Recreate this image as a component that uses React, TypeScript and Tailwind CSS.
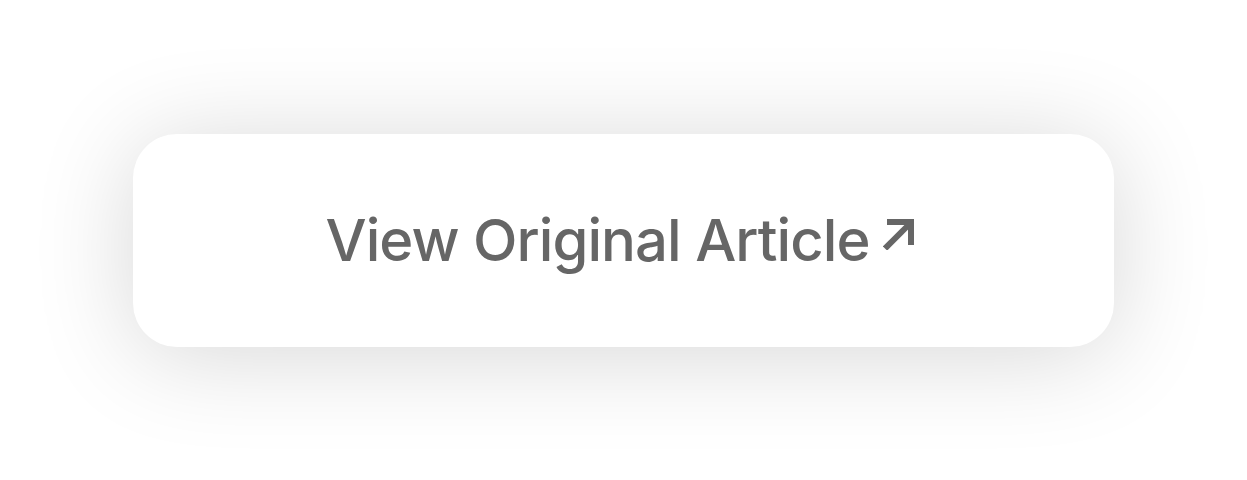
import React from 'react';

const ArrowNE: React.FC = () => (
  <svg width="32" height="33" viewBox="0 0 32 33" fill="none" className="shrink-0">
    <path d="M2 31.5 L26.5 7" stroke="#666666" strokeWidth="6" />
    <path d="M4 5 H28 V28" stroke="#666666" strokeWidth="6" strokeLinejoin="miter" />
  </svg>
);

const App: React.FC = () => {
  return (
    <div className="flex h-[480px] w-full items-center justify-center bg-white font-['Inter',sans-serif]">
      <button className="flex h-[213px] w-[981px] items-center justify-center gap-[13px] rounded-[44px] bg-white pr-[7px] shadow-[0_8px_100px_rgba(0,0,0,0.16)]">
        <span className="text-[58px] font-medium leading-none tracking-[-0.0165em] text-[#666666]">View Original Article</span>
        <span className="mt-[-14px]">
          <ArrowNE />
        </span>
      </button>
    </div>
  );
};

export default App;
